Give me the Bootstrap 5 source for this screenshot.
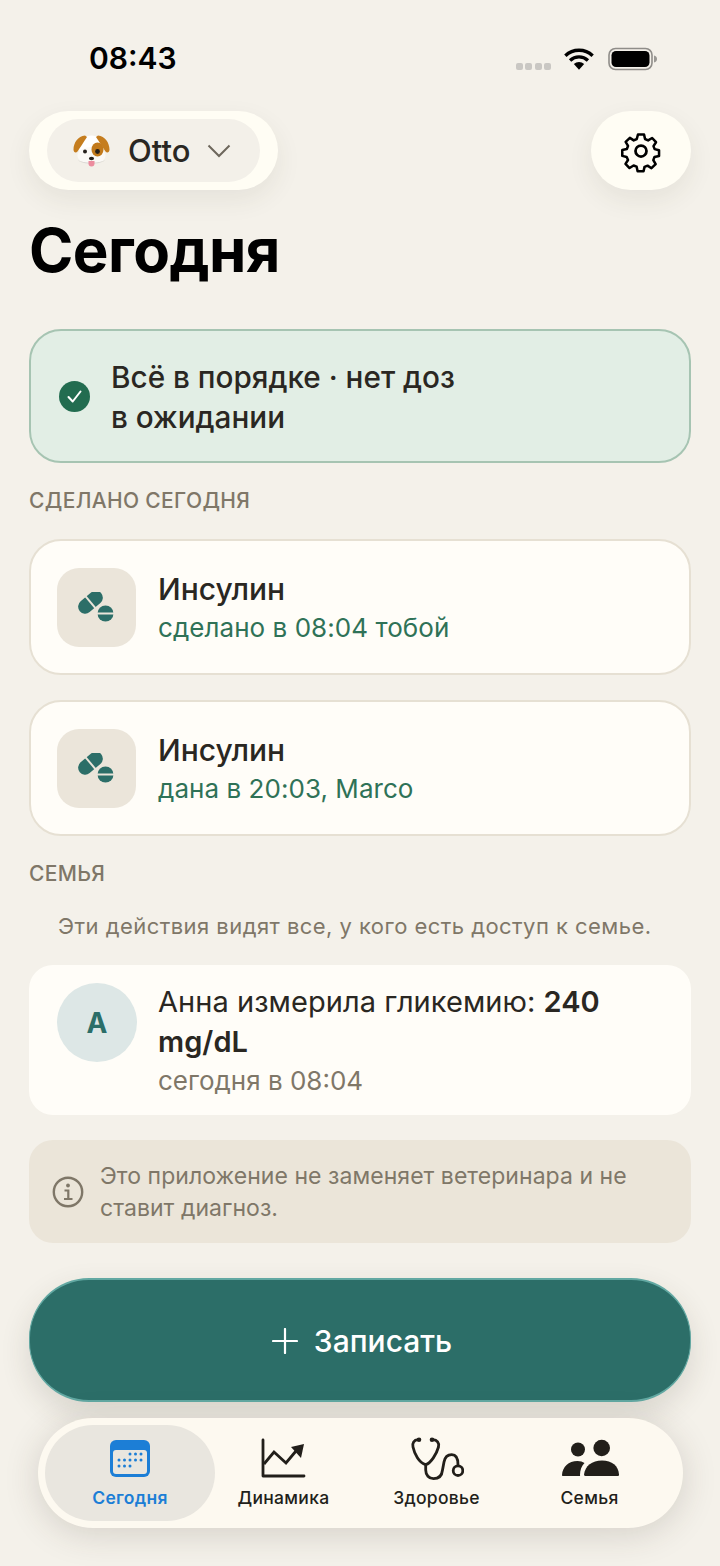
<!DOCTYPE html>
<html lang="ru">
<head>
  <meta charset="UTF-8">
  <title>Сегодня</title>
  <meta name="viewport" content="width=device-width, initial-scale=1">
  <link href="https://cdn.jsdelivr.net/npm/bootstrap@5.3.3/dist/css/bootstrap.min.css" rel="stylesheet">
  <style>
    html, body { height: 100%; }
    body { background: #f4f1ea; font-family: Inter, "Noto Sans", sans-serif; color: #2a2722; width: 720px; height: 1566px; overflow: hidden; }
    .screen { padding: 0 29px; height: 1566px; }
    .status-row { height: 111px; padding: 38px 33px 0 60px; }
    .clock { font-size: 30px; font-weight: 600; color: #000; line-height: 40px; }
    .status-icons { height: 40px; }
    .sig-dot { width: 7px; height: 7px; border-radius: 2px; background: #c9c7c3; }
    .sig-dots { margin-top: 16px; margin-right: 12px; gap: 2.5px; }
    .wifi-ico { margin-top: 1px; margin-right: 13px; }
    .batt-ico { margin-top: 1px; }
    .top-row { height: 79px; }
    .pet-outer { width: 249px; height: 79px; background: #fffdf4; border-radius: 40px; padding: 8px 18px; box-shadow: 0 10px 26px rgba(70, 60, 40, .08); }
    .pet-inner { height: 63px; width: 213px; background: #f3f0e9; border-radius: 32px; padding-left: 26px; }
    .pet-name { font-size: 31px; font-weight: 500; margin-left: 17px; margin-right: 17px; line-height: 1; }
    .gear-btn { width: 100px; height: 79px; background: #fffdf4; border-radius: 40px; box-shadow: 0 10px 26px rgba(70, 60, 40, .08); }
    .page-title { font-size: 60px; font-weight: 700; color: #000; line-height: 72px; margin: 24px 0 0; letter-spacing: -.55px; }
    .ok-banner { height: 134px; margin-top: 43px; background: #e2eee5; border: 2px solid #a6c4b2; border-radius: 32px; padding: 0 28px; }
    .ok-text { font-size: 29.7px; font-weight: 500; line-height: 40px; margin-left: 21px; width: 400px; padding-top: 2px; }
    .sect-label { font-size: 21px; font-weight: 500; color: #7f7768; letter-spacing: .35px; line-height: 24px; }
    .label-done { margin-top: 26px; margin-bottom: 26px; }
    .label-family { margin-top: 26px; }
    .dose-card { height: 136px; background: #fffdf8; border: 2px solid #e6e0d3; border-radius: 32px; padding: 0 26px; gap: 22px; }
    .dose-first { margin-bottom: 25px; }
    .dose-icon { width: 79px; height: 79px; background: #ebe5da; border-radius: 22px; flex: none; }
    .dose-name { font-size: 30px; font-weight: 500; line-height: 38px; padding-top: 2px; margin-bottom: 2px; }
    .dose-sub { font-size: 26px; color: #2f7257; line-height: 36px; letter-spacing: .05px; }
    .family-hint { font-size: 22px; color: #7f7768; line-height: 30px; letter-spacing: .45px; margin: 25px 0 24px; padding-left: 29px; white-space: nowrap; }
    .feed-card { height: 150px; background: #fffdf8; border-radius: 24px; padding: 18px 28px; gap: 21px; }
    .avatar-a { width: 80px; height: 79px; border-radius: 50%; background: #dde7e6; color: #2b6e68; font-size: 28px; font-weight: 700; flex: none; }
    .feed-line { font-size: 29px; line-height: 40px; letter-spacing: .05px; margin-top: -1px; }
    .feed-line b { font-weight: 600; }
    .feed-sub { font-size: 26px; color: #7f7768; line-height: 38px; }
    .note-box { height: 103px; background: #ebe5d9; border-radius: 24px; padding: 0 23px; margin-top: 25px; }
    .note-text { font-size: 23px; color: #7f7768; line-height: 32px; margin-left: 16px; letter-spacing: .05px; width: 540px; }
    .add-btn { height: 124px; margin-top: 35px; width: 100%; padding: 8px 0 6px 4px; background: #2c6e68; border: 2px solid #62a8a2; border-left-width: 1px; border-right-width: 1px; border-radius: 60px; color: #fff; font-size: 30px; font-weight: 500; box-shadow: 0 12px 30px rgba(60, 50, 35, .14); }
    .add-btn:hover { background: #2c6e68; color: #fff; border-color: #62a8a2; }
    .tab-bar { height: 110px; width: 645px; margin: 16px 0 0 9px; background: #fdf9f0; border-radius: 55px; padding: 7px 8px 7px 7px; box-shadow: 0 6px 34px rgba(60, 50, 35, .17); }
    .tab-item { height: 96px; font-size: 17.5px; font-weight: 500; color: #221f1a; letter-spacing: .3px; line-height: 22px; flex: none; }
    .tab-on { width: 170px; background: #e9e6df; border-radius: 48px; color: #1c7ed6; font-weight: 600; }
    .tab-2 { width: 137px; }
    .tab-3 { width: 169px; }
    .tab-4 { width: 137px; }
    .tab-ico { height: 44px; margin-bottom: 6px; }
  </style>
</head>
<body>
<div class="screen">

  <!-- status bar -->
  <div class="status-row d-flex justify-content-between">
    <div class="clock">08:43</div>
    <div class="status-icons d-flex align-items-center">
      <div class="sig-dots d-flex"><span class="sig-dot"></span><span class="sig-dot"></span><span class="sig-dot"></span><span class="sig-dot"></span></div>
      <svg class="wifi-ico" width="32" height="26" viewBox="0 0 34 26"><path d="M2.500 9.500a21 21 0 0 1 29 0M7.500 14.500a14 14 0 0 1 19 0" fill="none" stroke="#000" stroke-width="3.600"/><path d="M11.500 18.300a8.500 8.500 0 0 1 11 0L17 24.500z" fill="#000"/></svg>
      <svg class="batt-ico" width="50" height="24" viewBox="0 0 50 24"><rect x="1" y="1.500" width="43" height="21" rx="6.500" fill="none" stroke="#8f8d89" stroke-width="1.600"/><rect x="3.500" y="4" width="38" height="16" rx="4.500" fill="#000"/><path d="M46 8.500c2 .4 3 1.800 3 3.500s-1 3.100-3 3.500z" fill="#9a9894"/></svg>
    </div>
  </div>

  <!-- pet selector and settings -->
  <div class="top-row d-flex justify-content-between">
    <div class="pet-outer">
      <div class="pet-inner d-flex align-items-center">
        <svg width="38" height="34" viewBox="0 0 38 34">
          <circle cx="18.500" cy="14" r="12.500" fill="#fff"/>
          <ellipse cx="18.500" cy="21.500" rx="14" ry="8.500" fill="#fbf9f6"/>
          <path d="M5 26c4 3.500 23 3.500 27 0-4 5-23 5-27 0z" fill="#d9d6d2"/>
          <ellipse cx="24.500" cy="15.500" rx="6" ry="7" fill="#c27a1c"/>
          <path d="M12 1.500C5 2 .5 9 .5 15.500c0 3 2.500 4 4 2C7 14 10 9 14 3z" fill="#c57d1e"/>
          <path d="M25 1.500C32 2 36.500 9 36.500 15.500c0 3-2.500 4-4 2C30 14 27 9 23 3z" fill="#c57d1e"/>
          <circle cx="12" cy="17.500" r="2" fill="#26201c"/><circle cx="24.500" cy="17.500" r="2.400" fill="#26201c"/>
          <ellipse cx="18.500" cy="24.500" rx="2.600" ry="1.800" fill="#26201c"/>
          <path d="M15.500 27h6v2.500a3 3 0 0 1-6 0z" fill="#ec8c9e"/>
        </svg>
        <span class="pet-name">Otto</span>
        <svg width="24" height="14" viewBox="0 0 24 14"><path d="M1.500 1.500 12 12 22.500 1.500" fill="none" stroke="#6d675c" stroke-width="2"/></svg>
      </div>
    </div>
    <div class="gear-btn d-flex align-items-center justify-content-center">
      <svg width="44" height="44" viewBox="0 0 24 24" fill="none" stroke="#000" stroke-width="1.500" stroke-linejoin="round"><circle cx="12" cy="12" r="3"/><path d="M10.200 2.200h3.600l.6 2.700 1.800.8 2.400-1.400 2.300 2.500-1.500 2.300.7 1.800 2.600.7v3.400l-2.700.6-.7 1.800 1.400 2.400-2.500 2.400-2.300-1.500-1.800.7-.6 2.600h-3.500l-.6-2.700-1.800-.7-2.400 1.500-2.400-2.500 1.500-2.300-.8-1.800-2.600-.6v-3.500l2.700-.6.700-1.800-1.400-2.400 2.500-2.400 2.300 1.500 1.800-.8z" transform="translate(12 12) scale(.92) translate(-12 -12)"/></svg>
    </div>
  </div>

  <h1 class="page-title">Сегодня</h1>

  <!-- all good -->
  <div class="ok-banner d-flex align-items-center">
    <svg width="31" height="31" viewBox="0 0 31 31" class="flex-shrink-0"><circle cx="15.500" cy="15.500" r="15.500" fill="#226c50"/><path d="M9.500 16l4.200 4.500 7.800-10" fill="none" stroke="#fff" stroke-width="2" stroke-linecap="round" stroke-linejoin="round"/></svg>
    <div class="ok-text">Всё в порядке · нет доз в&nbsp;ожидании</div>
  </div>

  <div class="sect-label label-done text-uppercase">Сделано сегодня</div>

  <div class="dose-card dose-first d-flex align-items-center">
    <div class="dose-icon d-flex align-items-center justify-content-center">
      <svg width="38" height="30" viewBox="0 0 38 30"><g transform="translate(12.500 10.200) rotate(-40)"><rect x="-14" y="-7" width="28" height="14" rx="7" fill="#2c6e68"/><path d="M0-8V8" stroke="#ebe5da" stroke-width="2"/></g><circle cx="27.500" cy="21.500" r="8" fill="#2c6e68"/><path d="M19 21.500H36" stroke="#ebe5da" stroke-width="2"/></svg>
    </div>
    <div>
      <div class="dose-name">Инсулин</div>
      <div class="dose-sub">сделано в 08:04 тобой</div>
    </div>
  </div>

  <div class="dose-card d-flex align-items-center">
    <div class="dose-icon d-flex align-items-center justify-content-center">
      <svg width="38" height="30" viewBox="0 0 38 30"><g transform="translate(12.500 10.200) rotate(-40)"><rect x="-14" y="-7" width="28" height="14" rx="7" fill="#2c6e68"/><path d="M0-8V8" stroke="#ebe5da" stroke-width="2"/></g><circle cx="27.500" cy="21.500" r="8" fill="#2c6e68"/><path d="M19 21.500H36" stroke="#ebe5da" stroke-width="2"/></svg>
    </div>
    <div>
      <div class="dose-name">Инсулин</div>
      <div class="dose-sub">дана в 20:03, Marco</div>
    </div>
  </div>

  <div class="sect-label label-family text-uppercase">Семья</div>
  <div class="family-hint">Эти действия видят все, у кого есть доступ к семье.</div>

  <div class="feed-card d-flex">
    <div class="avatar-a d-flex align-items-center justify-content-center">А</div>
    <div>
      <div class="feed-line">Анна измерила гликемию: <b>240</b> <b>mg/dL</b></div>
      <div class="feed-sub">сегодня в 08:04</div>
    </div>
  </div>

  <div class="note-box d-flex align-items-center">
    <svg width="32" height="32" viewBox="0 0 32 32" class="flex-shrink-0"><circle cx="16" cy="16" r="14.200" fill="none" stroke="#7f7768" stroke-width="2.400"/><circle cx="16" cy="9.500" r="1.900" fill="#7f7768"/><path d="M12.500 14.500H16.300V22.500M12 23h8.500" fill="none" stroke="#7f7768" stroke-width="2.200"/></svg>
    <div class="note-text">Это приложение не заменяет ветеринара и не ставит диагноз.</div>
  </div>

  <button type="button" class="btn add-btn d-flex align-items-center justify-content-center">
    <svg class="me-3" width="26" height="26" viewBox="0 0 26 26"><path d="M13 1v24M1 13h24" stroke="#fff" stroke-width="2.200" stroke-linecap="round"/></svg>
    Записать
  </button>

  <!-- tab bar -->
  <nav class="tab-bar d-flex">
    <div class="tab-item tab-on d-flex flex-column align-items-center justify-content-center">
      <svg class="tab-ico" width="42" height="40" viewBox="0 0 42 40">
        <rect x="1" y="1" width="40" height="37" rx="6" fill="#1c7ed6"/>
        <rect x="4" y="11" width="34" height="24" rx="3" fill="#e9e6df"/>
        <g fill="#1c7ed6"><circle cx="21" cy="15" r="1.500"/><circle cx="26.500" cy="15" r="1.500"/><circle cx="32" cy="15" r="1.500"/><circle cx="10" cy="21" r="1.500"/><circle cx="15.500" cy="21" r="1.500"/><circle cx="21" cy="21" r="1.500"/><circle cx="26.500" cy="21" r="1.500"/><circle cx="32" cy="21" r="1.500"/><circle cx="10" cy="27" r="1.500"/><circle cx="15.500" cy="27" r="1.500"/><circle cx="21" cy="27" r="1.500"/></g>
      </svg>
      <span>Сегодня</span>
    </div>
    <div class="tab-item tab-2 d-flex flex-column align-items-center justify-content-center">
      <svg class="tab-ico" width="46" height="40" viewBox="0 0 46 40">
        <path d="M2 1v36h41" fill="none" stroke="#221f1a" stroke-width="2.800" stroke-linecap="round" stroke-linejoin="round"/>
        <path d="M3 25l10-12 12 11 10-12" fill="none" stroke="#221f1a" stroke-width="2.800"/>
        <path d="M43 5l-13 3 10 11z" fill="#221f1a"/>
      </svg>
      <span>Динамика</span>
    </div>
    <div class="tab-item tab-3 d-flex flex-column align-items-center justify-content-center">
      <svg class="tab-ico" width="54" height="44" viewBox="-1 0 54 44">
        <path d="M7 2.700C3 3 1 6 2 10c1.500 7 6 16 12.700 17.700C20 26 25.500 17 27.500 10c1-4-1.500-7-5.500-7.300" fill="none" stroke="#221f1a" stroke-width="2.800" stroke-linecap="round"/>
        <path d="M14.700 27.700V33c0 5 3.300 8.700 7.800 8.700 5.500 0 8.500-3.700 9-8.700l1.500-8c1-5 4-7.300 7.700-7.300 3.300 0 6.300 2.300 6.300 10" fill="none" stroke="#221f1a" stroke-width="2.800" stroke-linecap="round"/>
        <circle cx="8" cy="2.700" r="2.300" fill="#221f1a"/><circle cx="21" cy="2.700" r="2.300" fill="#221f1a"/>
        <circle cx="47" cy="33.700" r="4.800" fill="#fdf9f0" stroke="#221f1a" stroke-width="2.800"/>
      </svg>
      <span>Здоровье</span>
    </div>
    <div class="tab-item tab-4 d-flex flex-column align-items-center justify-content-center">
      <svg class="tab-ico" width="58" height="40" viewBox="0 0 58 40">
        <g fill="#221f1a"><circle cx="17" cy="10.500" r="7"/><circle cx="40.700" cy="9" r="8.300"/><path d="M2 37c-.6 0-1-.4-1-1 .5-8 6.500-14 15.500-14 3 0 5 .7 7 2-3 3-4.500 7-4.500 12 0 .4 0 .7.200 1z"/><path d="M24.500 37c-1 0-1.500-.7-1.500-1.500C24 27 31 21.500 41 21.500S57.500 27 58 35.500c0 1-.5 1.500-1.500 1.500z"/></g>
      </svg>
      <span>Семья</span>
    </div>
  </nav>

</div>
<script src="https://cdn.jsdelivr.net/npm/bootstrap@5.3.3/dist/js/bootstrap.bundle.min.js"></script>
</body>
</html>
